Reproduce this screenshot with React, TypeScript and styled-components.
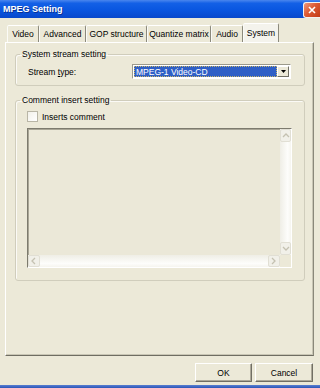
import React from 'react'
import styled, { createGlobalStyle } from 'styled-components'

const GlobalStyle = createGlobalStyle`
  html, body {
    margin: 0;
    padding: 0;
    background: #ece9d8;
  }
  body {
    font-family: "Liberation Sans", Arial, sans-serif;
    font-size: 8.5px;
    color: #000;
  }
`

const Window = styled.div`
  width: 320px;
  height: 388px;
  display: flex;
  flex-direction: column;
  background: #ece9d8;
  overflow: hidden;
`

const TitleBar = styled.div`
  flex: none;
  height: 18px;
  display: flex;
  align-items: center;
  justify-content: space-between;
  padding-left: 3px;
  background: linear-gradient(#4a86ee 0%, #1360e6 18%, #0a56e0 55%, #0848cc 100%);
  color: #fff;
  font-size: 9px;
  font-weight: bold;
  text-shadow: 1px 1px 0 #0b3295;
`

const CloseButton = styled.div`
  width: 16px;
  height: 14px;
  margin-top: 1px;
  display: flex;
  align-items: center;
  justify-content: center;
  border: 1px solid #f2f2f2;
  border-right: none;
  border-radius: 3px 0 0 3px;
  background: linear-gradient(135deg, #ef9a7e 0%, #dc5a34 45%, #c23a14 100%);
`

const Body = styled.div`
  flex: 1;
  display: flex;
  flex-direction: column;
  padding: 5px 6px 0 5px;
`

const TabStrip = styled.div`
  height: 19px;
  display: flex;
  align-items: flex-end;
  padding-left: 2px;
`

const Tab = styled.div<{ w: number; active?: boolean }>`
  width: ${p => p.w}px;
  height: ${p => (p.active ? 19 : 17)}px;
  box-sizing: border-box;
  display: flex;
  align-items: center;
  justify-content: center;
  border-top: 1px solid #fff;
  border-left: 1px solid #fbfbf7;
  border-right: 1px solid #8c8a7c;
  border-radius: 2px 2px 0 0;
  background: ${p => (p.active ? '#f4f3ec' : '#ece9d8')};
  white-space: nowrap;
`

const TabPanel = styled.div`
  height: 314px;
  box-sizing: border-box;
  display: flex;
  flex-direction: column;
  gap: 9px;
  padding: 6px 8px 0 9px;
  border-top: 1px solid #fff;
  border-left: 1px solid #fff;
  border-right: 1px solid #8a887a;
  border-bottom: 1px solid #6f6d62;
  box-shadow: inset -1px -1px 0 #c9c6b5;
`

const Group = styled.fieldset`
  margin: 0;
  padding: 0;
  border: 1px solid #d0cdbc;
  border-radius: 3px;
  box-shadow: inset 1px 1px 0 #fbfaf6;
`

const Legend = styled.legend`
  margin-left: 4px;
  padding: 0 2px;
  line-height: 10px;
`

const StreamRow = styled.div`
  display: flex;
  align-items: center;
  height: 15px;
  margin-top: 5px;
  padding: 0 12px 6px 12px;
`

const FieldLabel = styled.span`
  width: 104px;
`

const Combo = styled.div`
  width: 159px;
  height: 15px;
  box-sizing: border-box;
  display: flex;
  padding: 1px;
  border-top: 1px solid #9c9a8c;
  border-left: 1px solid #9c9a8c;
  border-right: 1px solid #fff;
  border-bottom: 1px solid #fff;
  background: #fff;
`

const ComboValue = styled.div`
  flex: 1;
  display: flex;
  align-items: center;
  padding-left: 2px;
  background: #2f5fc6;
  color: #fff;
  outline: 1px dotted #c8b66a;
  outline-offset: -1px;
`

const ComboButton = styled.div`
  width: 12px;
  display: flex;
  align-items: center;
  justify-content: center;
  box-sizing: border-box;
  border-top: 1px solid #fff;
  border-left: 1px solid #fff;
  border-right: 1px solid #716f64;
  border-bottom: 1px solid #716f64;
  background: #ece9d8;
`

const CommentBody = styled.div`
  display: flex;
  flex-direction: column;
  gap: 6px;
  padding: 6px 12px 12px 11px;
`

const CheckRow = styled.label`
  display: flex;
  align-items: center;
  gap: 4px;
  height: 11px;
`

const CheckBox = styled.span`
  width: 11px;
  height: 11px;
  box-sizing: border-box;
  border: 1px solid #b9b6a6;
  background: linear-gradient(135deg, #f2f1ea, #ffffff);
`

const TextBox = styled.div`
  height: 140px;
  box-sizing: border-box;
  display: grid;
  grid-template-columns: 1fr 11px;
  grid-template-rows: 1fr 12px;
  border-top: 1px solid #7d7b6e;
  border-left: 1px solid #7d7b6e;
  border-right: 1px solid #fff;
  border-bottom: 1px solid #fff;
  box-shadow: inset 1px 1px 0 #a9a696;
  background: #ebe8d8;
`

const VScroll = styled.div`
  display: flex;
  flex-direction: column;
  justify-content: space-between;
  background: linear-gradient(90deg, #efeee6, #fdfdfb 70%, #f6f5ef);
`

const HScroll = styled.div`
  display: flex;
  justify-content: space-between;
  background: linear-gradient(#efeee6, #fdfdfb 70%, #f6f5ef);
`

const ScrollButton = styled.div<{ horizontal?: boolean }>`
  width: ${p => (p.horizontal ? 12 : 11)}px;
  height: ${p => (p.horizontal ? 12 : 13)}px;
  box-sizing: border-box;
  display: flex;
  align-items: center;
  justify-content: center;
  border: 1px solid #e1dfd4;
  border-radius: 2px;
  background: #f1f0e9;
`

const Corner = styled.div`
  background: #ece9d8;
`

const Footer = styled.div`
  display: flex;
  justify-content: flex-end;
  gap: 3px;
  padding: 7px 1px 0 0;
`

const Button = styled.button<{ w: number }>`
  width: ${p => p.w}px;
  height: 19px;
  padding: 0;
  font: inherit;
  color: #000;
  background: #ece9d8;
  border-top: 1px solid #fff;
  border-left: 1px solid #fff;
  border-right: 1px solid #716f64;
  border-bottom: 1px solid #716f64;
  box-shadow: inset -1px -1px 0 #aca899;
  border-radius: 1px;
`

const BottomFrame = styled.div`
  flex: none;
  height: 3px;
  background: linear-gradient(#5a7fd0, #2a55b8);
`

const Chevron = ({ dir }: { dir: 'up' | 'down' | 'left' | 'right' }) => {
  const pts = {
    up: '1,5 4,2 7,5',
    down: '1,2 4,5 7,2',
    left: '5,1 2,4 5,7',
    right: '2,1 5,4 2,7',
  }[dir]
  return (
    <svg width="8" height="8" viewBox="0 0 8 8">
      <polyline points={pts} fill="none" stroke="#c4c1b1" strokeWidth="1.3" />
    </svg>
  )
}

const tabs = [
  { label: 'Video', w: 32 },
  { label: 'Advanced', w: 47 },
  { label: 'GOP structure', w: 61 },
  { label: 'Quantize matrix', w: 64 },
  { label: 'Audio', w: 32 },
  { label: 'System', w: 36, active: true },
]

export default function App() {
  return (
    <Window>
      <GlobalStyle />
      <TitleBar>
        <span>MPEG Setting</span>
        <CloseButton>
          <svg width="8" height="8" viewBox="0 0 8 8">
            <path d="M1 1 L7 7 M7 1 L1 7" stroke="#fff" strokeWidth="1.6" />
          </svg>
        </CloseButton>
      </TitleBar>
      <Body>
        <TabStrip>
          {tabs.map(t => (
            <Tab key={t.label} w={t.w} active={t.active}>
              {t.label}
            </Tab>
          ))}
        </TabStrip>
        <TabPanel>
          <Group>
            <Legend>System stream setting</Legend>
            <StreamRow>
              <FieldLabel>
                Stream <u>t</u>ype:
              </FieldLabel>
              <Combo>
                <ComboValue>MPEG-1 Video-CD</ComboValue>
                <ComboButton>
                  <svg width="5" height="3" viewBox="0 0 5 3">
                    <path d="M0 0 H5 L2.5 3 Z" fill="#000" />
                  </svg>
                </ComboButton>
              </Combo>
            </StreamRow>
          </Group>
          <Group>
            <Legend>Comment insert setting</Legend>
            <CommentBody>
              <CheckRow>
                <CheckBox />
                <span>Inserts comment</span>
              </CheckRow>
              <TextBox>
                <div />
                <VScroll>
                  <ScrollButton>
                    <Chevron dir="up" />
                  </ScrollButton>
                  <ScrollButton>
                    <Chevron dir="down" />
                  </ScrollButton>
                </VScroll>
                <HScroll>
                  <ScrollButton horizontal>
                    <Chevron dir="left" />
                  </ScrollButton>
                  <ScrollButton horizontal>
                    <Chevron dir="right" />
                  </ScrollButton>
                </HScroll>
                <Corner />
              </TextBox>
            </CommentBody>
          </Group>
        </TabPanel>
        <Footer>
          <Button w={57}>OK</Button>
          <Button w={58}>Cancel</Button>
        </Footer>
      </Body>
      <BottomFrame />
    </Window>
  )
}
